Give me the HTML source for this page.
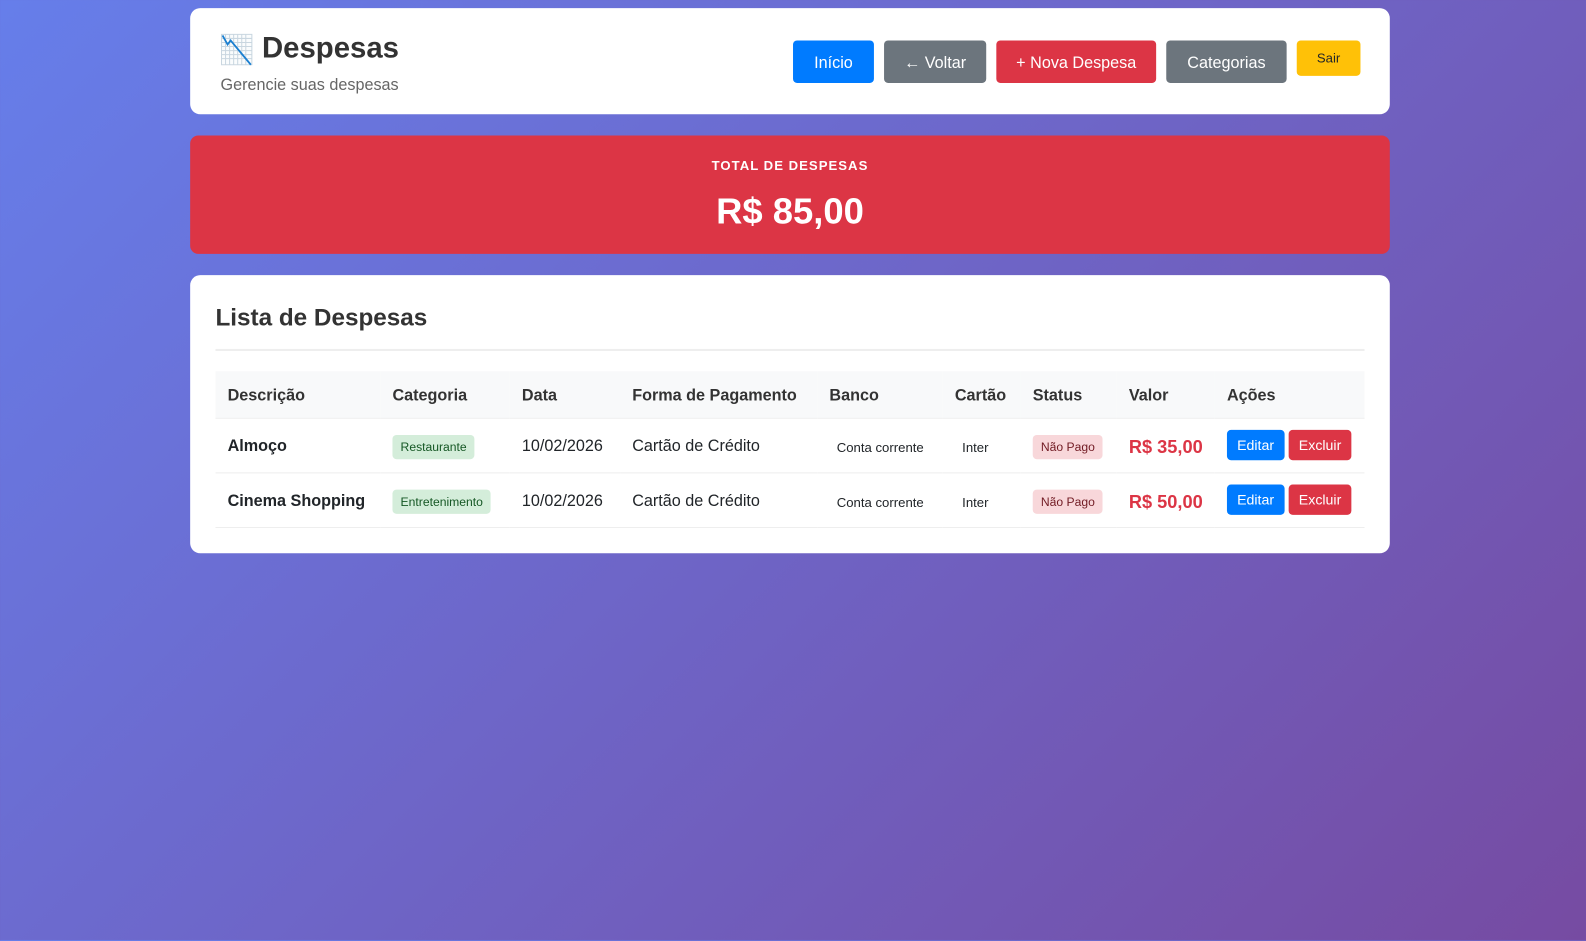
<!DOCTYPE html>
<html><head><meta charset="utf-8"><style>
*{box-sizing:border-box;margin:0;padding:0}
body{width:1586px;height:940px;overflow:hidden;font-family:"Liberation Sans","Noto Sans CJK SC",sans-serif;background:linear-gradient(135deg,#667eea 0%,#764ba2 100%);color:#212529}
#w{position:absolute;left:0;top:0;width:1568px;height:930px;transform:scale(1.0115);transform-origin:0 0}
.card{position:absolute;left:188px;width:1186px;background:#fff;border-radius:10px}
.hdr{top:8px;height:105px}
.hdr h1{position:absolute;left:30px;top:24px;font-size:29px;font-weight:bold;color:#333;display:flex;align-items:center}
.hdr .sub{position:absolute;left:30px;top:68px;font-size:16px;color:#666}
.btn{position:absolute;color:#fff;border-radius:4px;font-size:16px;display:flex;align-items:center;justify-content:center;padding-top:3px}
.total{top:134px;height:117px;background:#dc3545;border-radius:8px;color:#fff;text-align:center}
.total .l{position:absolute;top:22px;width:100%;font-size:13px;font-weight:bold;letter-spacing:1px}
.list{top:272px;height:275px}
.list h2{position:absolute;left:25px;top:29px;font-size:24px;font-weight:bold;color:#333}
.hr{position:absolute;left:25px;right:25px;top:73px;border-top:2px solid #eee}
table{position:absolute;left:25px;top:95px;width:1136px;border-collapse:collapse;font-size:16px}
th{background:#f8f9fa;height:46px;text-align:left;font-weight:bold;color:#333;padding-left:12px;padding-top:4px;border-bottom:1px solid #eee}
td{height:54px;padding-left:12px;padding-top:4px;border-bottom:1px solid #eee}
.b{display:inline-block;padding:5px 8px;border-radius:4px;font-size:12px}
.g{background:#d4edda;color:#155724}.r{background:#f8d7da;color:#721c24}
.sm{font-size:13px}
.val{color:#dc3545;font-weight:bold;font-size:18px}
.ab{display:inline-block;color:#fff;font-size:14px;padding:7px 10px;border-radius:4px;margin-top:-4px}
</style></head><body><div id="w">
<div class="card hdr">
<h1><svg width="32" height="32" viewBox="0 0 32 32" style="margin-right:9px"><g stroke="#c9d6e0" stroke-width="1"><path d="M1 1h30v30H1z" fill="#fafcfd"/><path d="M5 1v30M9 1v30M13 1v30M17 1v30M21 1v30M25 1v30M1 5h30M1 9h30M1 13h30M1 17h30M1 21h30M1 25h30"/></g><path d="M2 2l5 9 3-4 20 24" fill="none" stroke="#1a7fd0" stroke-width="1.8"/></svg>Despesas</h1>
<div class="sub">Gerencie suas despesas</div>
<div class="btn" style="left:596px;top:32px;width:80px;height:42px;background:#007bff">Início</div>
<div class="btn" style="left:686px;top:32px;width:101px;height:42px;background:#6c757d">← Voltar</div>
<div class="btn" style="left:797px;top:32px;width:158px;height:42px;background:#dc3545">+ Nova Despesa</div>
<div class="btn" style="left:965px;top:32px;width:119px;height:42px;background:#6c757d">Categorias</div>
<div class="btn" style="left:1094px;top:32px;width:63px;height:35px;background:#ffc107;color:#212529;font-size:13px;padding-top:0">Sair</div>
</div>
<div class="card total"><div class="l">TOTAL DE DESPESAS</div><div style="position:absolute;top:54px;width:100%;font-size:36px;font-weight:bold">R$ 85,00</div></div>
<div class="card list">
<h2>Lista de Despesas</h2><div class="hr"></div>
<table>
<tr><th style="width:163px">Descrição</th><th style="width:128px">Categoria</th><th style="width:109px">Data</th><th style="width:195px">Forma de Pagamento</th><th style="width:124px">Banco</th><th style="width:77px">Cartão</th><th style="width:95px">Status</th><th style="width:97px">Valor</th><th>Ações</th></tr>
<tr><td><b>Almoço</b></td><td><span class="b g">Restaurante</span></td><td>10/02/2026</td><td>Cartão de Crédito</td><td class="sm">&nbsp;&nbsp;Conta corrente</td><td class="sm">&nbsp;&nbsp;Inter</td><td><span class="b r">Não Pago</span></td><td class="val">R$ 35,00</td><td><span class="ab" style="background:#007bff">Editar</span> <span class="ab" style="background:#dc3545">Excluir</span></td></tr>
<tr><td><b>Cinema Shopping</b></td><td><span class="b g">Entretenimento</span></td><td>10/02/2026</td><td>Cartão de Crédito</td><td class="sm">&nbsp;&nbsp;Conta corrente</td><td class="sm">&nbsp;&nbsp;Inter</td><td><span class="b r">Não Pago</span></td><td class="val">R$ 50,00</td><td><span class="ab" style="background:#007bff">Editar</span> <span class="ab" style="background:#dc3545">Excluir</span></td></tr>
</table>
</div>
</div></body></html>
